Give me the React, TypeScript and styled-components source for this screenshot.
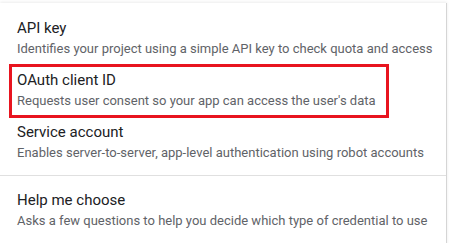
import React from "react";
import styled, { createGlobalStyle } from "styled-components";

const Global = createGlobalStyle`
  html, body { margin: 0; padding: 0; background: #ffffff; }
  body { font-family: Roboto, "Liberation Sans", Arial, sans-serif; }
`;

const Card = styled.div`
  position: relative;
  width: 447px;
  height: 250px;
  margin-top: 3px;
  background: #ffffff;
  border-right: 1px solid #d5d5d5;
  box-shadow: 0 -1px 3px rgba(0, 0, 0, 0.08);
  box-sizing: border-box;
`;

const Menu = styled.ul`
  list-style: none;
  margin: 0;
  padding: 14px 0 0 0;
  display: flex;
  flex-direction: column;
`;

const Item = styled.li`
  display: flex;
  flex-direction: column;
  padding: 0 16px 0 17px;
  height: 52px;
`;

const Title = styled.div`
  font-size: 15px;
  line-height: 22px;
  color: #202124;
`;

const Desc = styled.div`
  font-size: 13px;
  line-height: 20px;
  color: #5f6368;
  white-space: nowrap;
`;

const Divider = styled.li`
  height: 1px;
  background: #e0e0e0;
  margin: 2px 0 13px 0;
`;

const Highlight = styled.div`
  position: absolute;
  left: 9px;
  top: 61px;
  width: 380px;
  height: 54px;
  border: 3px solid #e8141f;
  box-sizing: border-box;
  pointer-events: none;
`;

const items = [
  { title: "API key", desc: "Identifies your project using a simple API key to check quota and access" },
  { title: "OAuth client ID", desc: "Requests user consent so your app can access the user's data" },
  { title: "Service account", desc: "Enables server-to-server, app-level authentication using robot accounts" },
];

export default function App() {
  return (
    <>
      <Global />
      <Card>
        <Menu>
          {items.map((it) => (
            <Item key={it.title}>
              <Title>{it.title}</Title>
              <Desc>{it.desc}</Desc>
            </Item>
          ))}
          <Divider />
          <Item>
            <Title>Help me choose</Title>
            <Desc>Asks a few questions to help you decide which type of credential to use</Desc>
          </Item>
        </Menu>
        <Highlight />
      </Card>
    </>
  );
}
